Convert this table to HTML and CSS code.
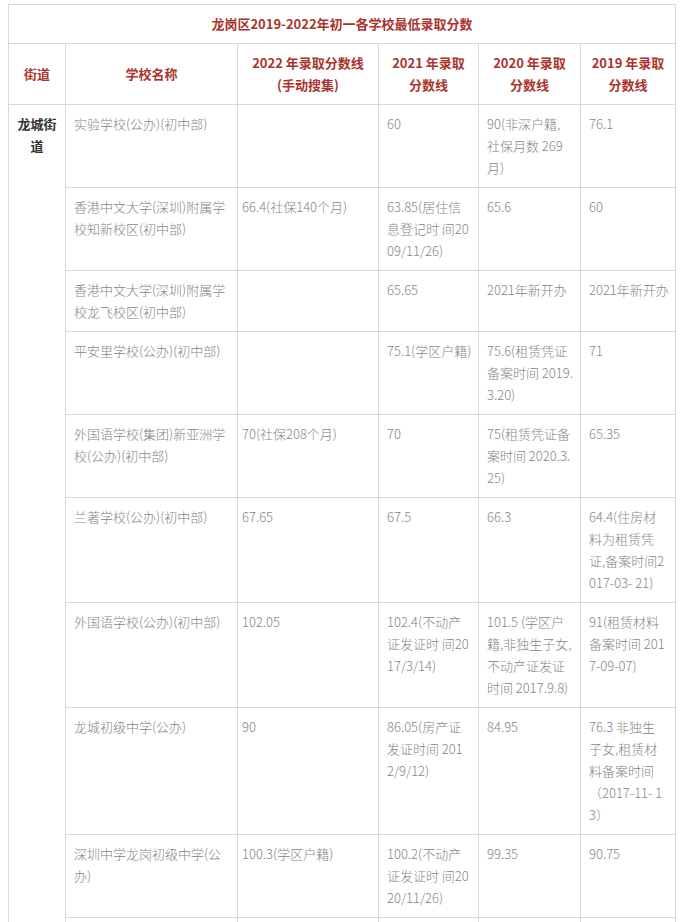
FILE: index.html
```html
<!DOCTYPE html>
<html lang="zh-CN">
<head>
<meta charset="utf-8">
<title>龙岗区2019-2022年初一各学校最低录取分数</title>
<link rel="stylesheet" href="styles.css">
</head>
<body>
<table class="scores">
  <colgroup>
    <col class="c-street">
    <col class="c-school">
    <col class="c-2022">
    <col class="c-2021">
    <col class="c-2020">
    <col class="c-2019">
  </colgroup>
  <thead>
    <tr>
      <th class="title" colspan="6">龙岗区2019-2022年初一各学校最低录取分数</th>
    </tr>
    <tr>
      <th>街道</th>
      <th>学校名称</th>
      <th>2022 年录取分数线<br>(手动搜集)</th>
      <th>2021 年录取<br>分数线</th>
      <th>2020 年录取<br>分数线</th>
      <th>2019 年录取<br>分数线</th>
    </tr>
  </thead>
  <tbody>
    <tr>
      <td class="street" rowspan="10">龙城街<br>道</td>
      <td>实验学校(公办)(初中部)</td>
      <td class="y22"></td>
      <td>60</td>
      <td>90(非深户籍,<br>社保月数 269<br>月)</td>
      <td>76.1</td>
    </tr>
    <tr>
      <td>香港中文大学(深圳)附属学<br>校知新校区(初中部)</td>
      <td class="y22">66.4(社保140个月)</td>
      <td>63.85(居住信<br>息登记时 间20<br>09/11/26)</td>
      <td>65.6</td>
      <td>60</td>
    </tr>
    <tr>
      <td>香港中文大学(深圳)附属学<br>校龙飞校区(初中部)</td>
      <td class="y22"></td>
      <td>65.65</td>
      <td>2021年新开办</td>
      <td>2021年新开办</td>
    </tr>
    <tr>
      <td>平安里学校(公办)(初中部)</td>
      <td class="y22"></td>
      <td>75.1(学区户籍)</td>
      <td>75.6(租赁凭证<br>备案时间 2019.<br>3.20)</td>
      <td>71</td>
    </tr>
    <tr>
      <td>外国语学校(集团)新亚洲学<br>校(公办)(初中部)</td>
      <td class="y22">70(社保208个月)</td>
      <td>70</td>
      <td>75(租赁凭证备<br>案时间 2020.3.<br>25)</td>
      <td>65.35</td>
    </tr>
    <tr>
      <td>兰著学校(公办)(初中部)</td>
      <td class="y22">67.65</td>
      <td>67.5</td>
      <td>66.3</td>
      <td>64.4(住房材<br>料为租赁凭<br>证,备案时间2<br>017-03- 21)</td>
    </tr>
    <tr>
      <td>外国语学校(公办)(初中部)</td>
      <td class="y22">102.05</td>
      <td>102.4(不动产<br>证发证时 间20<br>17/3/14)</td>
      <td>101.5 (学区户<br>籍,非独生子女,<br>不动产证发证<br>时间 2017.9.8)</td>
      <td>91(租赁材料<br>备案时间 201<br>7-09-07)</td>
    </tr>
    <tr>
      <td>龙城初级中学(公办)</td>
      <td class="y22">90</td>
      <td>86.05(房产证<br>发证时间 201<br>2/9/12)</td>
      <td>84.95</td>
      <td>76.3 非独生<br>子女,租赁材<br>料备案时间<br>（2017-11- 1<br>3）</td>
    </tr>
    <tr>
      <td>深圳中学龙岗初级中学(公<br>办)</td>
      <td class="y22">100.3(学区户籍)</td>
      <td>100.2(不动产<br>证发证时 间20<br>20/11/26)</td>
      <td>99.35</td>
      <td>90.75</td>
    </tr>
    <tr class="tail">
      <td></td>
      <td class="y22"></td>
      <td></td>
      <td></td>
      <td></td>
    </tr>
  </tbody>
</table>
</body>
</html>
```

FILE: styles.css
```css
html, body {
  background: #ffffff;
}

body {
  margin: 4px 8px 0;
  font-family: "Noto Sans CJK SC", "Noto Sans", sans-serif;
  font-size: 13px;
  font-weight: 300;
  line-height: 22px;
  color: #858585;
}

.scores {
  border-collapse: collapse;
  table-layout: fixed;
  width: 667px;
}

.c-street { width: 57px; }
.c-school { width: 172px; }
.c-2022 { width: 141px; }
.c-2021 { width: 100px; }
.c-2020 { width: 102px; }
.c-2019 { width: 95px; }

.scores th,
.scores td {
  border: 1px solid #d9d9d9;
  padding: 8px 8px;
  white-space: nowrap;
  overflow: visible;
}

.scores th {
  color: #a8352f;
  font-weight: bold;
  text-align: center;
  vertical-align: middle;
}

.scores td {
  text-align: left;
  vertical-align: top;
}

.scores td.y22 {
  padding-left: 4px;
}

.scores td.street {
  color: #333333;
  font-weight: bold;
  text-align: center;
  padding-left: 4px;
  padding-right: 4px;
}

.scores tr.tail td {
  height: 66px;
}
```
